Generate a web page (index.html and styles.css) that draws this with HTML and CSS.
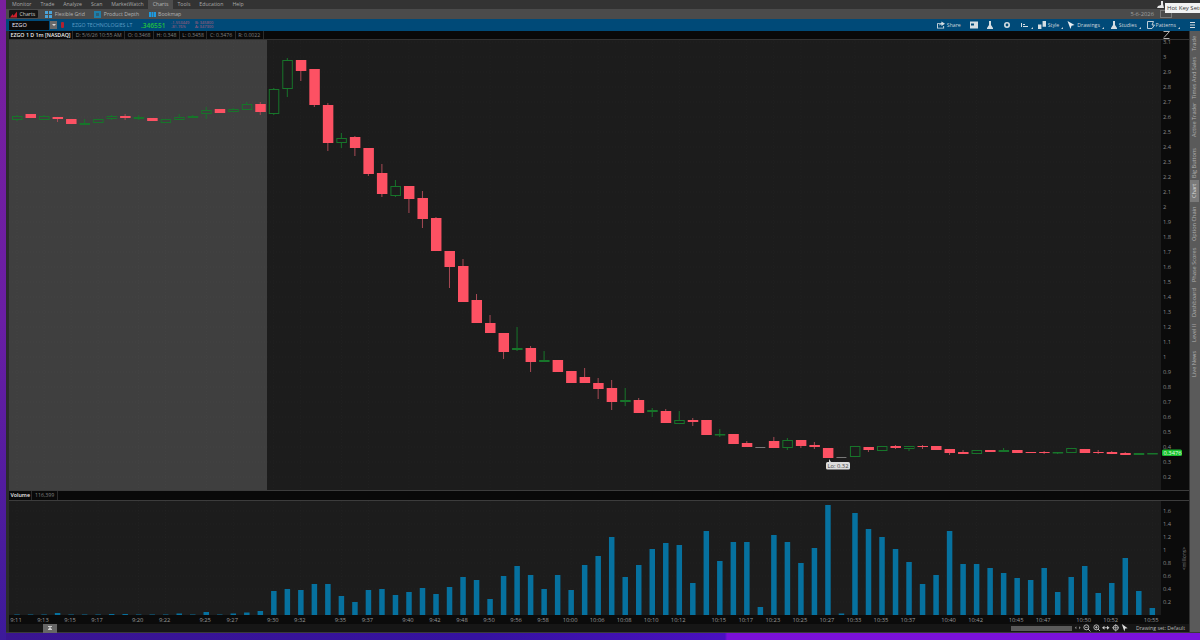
FILE: index.html
```html
<!DOCTYPE html>
<html lang="en">
<head>
    <meta charset="UTF-8">
    <title>EZGO Chart</title>
    <link rel="stylesheet" href="styles.css">
</head>
<body>
    <div class="window">
        <div class="menu-bar">
            <span class="menu-item">Monitor</span>
            <span class="menu-item">Trade</span>
            <span class="menu-item">Analyze</span>
            <span class="menu-item">Scan</span>
            <span class="menu-item">MarketWatch</span>
            <span class="menu-item active">Charts</span>
            <span class="menu-item">Tools</span>
            <span class="menu-item">Education</span>
            <span class="menu-item">Help</span>
        </div>

        <div class="sub-bar">
            <div class="sub-tab selected">
                <svg class="sub-icon" viewBox="0 0 8 7"><path d="M0 7 3 3l1 2 4-5v7z" fill="#c8202c"/></svg>
                <span>Charts</span>
            </div>
            <div class="sub-tab">
                <svg class="sub-icon" viewBox="0 0 7 7"><path d="M0 0h3v3H0zM4 0h3v3H4zM0 4h3v3H0zM4 4h3v3H4z" fill="#4aa3d8"/></svg>
                <span>Flexible Grid</span>
            </div>
            <div class="sub-tab">
                <svg class="sub-icon" viewBox="0 0 7 7"><rect width="7" height="7" fill="#1f7ea8"/><rect x="2" y="2" width="3" height="3" fill="#2a5f78"/></svg>
                <span>Product Depth</span>
            </div>
            <div class="sub-tab">
                <svg class="sub-icon" viewBox="0 0 7 7"><path d="M0 1h2v5H0zM2.500 1h2v5h-2zM5 1h2v5H5z" fill="#1d9ae0"/></svg>
                <span>Bookmap</span>
            </div>
            <div class="sub-right">
                <span class="date">5-6-2026</span>
                <span class="date-box"></span>
            </div>
        </div>

        <div class="symbol-bar">
            <div class="symbol-input">EZGO</div>
            <div class="symbol-drop"><span class="drop-arrow"></span></div>
            <span class="symbol-flag"></span>
            <span class="symbol-name">EZGO TECHNOLOGIES LT</span>
            <span class="symbol-price">.346551</span>
            <div class="symbol-stats">
                <span>-1.553449</span>
                <span>-81.76%</span>
            </div>
            <div class="symbol-stats">
                <span>B: 345800</span>
                <span>A: 347300</span>
            </div>
            <div class="tools">
                <span class="tool share">
                    <svg viewBox="0 0 9 8"><path d="M0 2h4v1H1v4h6V5h1v3H0z M5 0l4 2.500L5 5V3.500C4 3.500 3 4 2.500 5 2.500 3 3.500 2 5 1.500z" fill="#d5dde2"/></svg>
                    Share
                </span>
                <span class="tool icon-only screen">
                    <svg viewBox="0 0 8 7"><path d="M0 0h8v7H0z" fill="#d5dde2"/><path d="M1 2h3v2H1z" fill="#004a78"/></svg>
                </span>
                <span class="tool icon-only flask">
                    <svg viewBox="0 0 8 8"><path d="M3 0h2v4l2 3v1H1V7l2-3z" fill="#d5dde2"/></svg>
                </span>
                <span class="tool icon-only gear">
                    <svg viewBox="0 0 8 8"><circle cx="4" cy="4" r="2.200" fill="none" stroke="#d5dde2" stroke-width="1.600"/></svg>
                </span>
                <span class="tool icon-only bars">
                    <svg viewBox="0 0 8 6"><path d="M0 1h1v4H0zM2 2h2v1H2zM2 4h5v1H2z" fill="#d5dde2"/></svg>
                </span>
                <span class="tool style">
                    <svg viewBox="0 0 7 7"><path d="M0 3h3v4H0zM4 0h3v5H4z" fill="#d5dde2"/></svg>
                    Style
                </span>
                <span class="tool drawings">
                    <svg viewBox="0 0 7 8"><path d="M0 0l7 4-3 .8L3 8z" fill="#e8eef2"/></svg>
                    Drawings
                </span>
                <span class="tool studies">
                    <svg viewBox="0 0 8 8"><path d="M3 0h2v4l2 3v1H1V7l2-3z" fill="#d5dde2"/></svg>
                    Studies
                </span>
                <span class="tool patterns">
                    <svg viewBox="0 0 8 8"><path d="M.5.5h6L5 4h2.500L5 7.500H.5z" fill="none" stroke="#d5dde2" stroke-width=".9"/></svg>
                    Patterns
                </span>
                <span class="tool icon-only last">
                    <svg viewBox="0 0 8 8"><path d="M1 1h5v1H1zM1 3.500h5v1H1zM1 6h5v1H1z" fill="#d5dde2"/></svg>
                </span>
            </div>
        </div>

        <div class="workspace">
            <div class="chart-column">
                <div class="info-bar">
                    <span class="info-cell title">EZGO 1 D 1m [NASDAQ]</span>
                    <span class="info-cell">D: 5/6/26 10:55 AM</span>
                    <span class="info-cell">O: 0.3468</span>
                    <span class="info-cell">H: 0.348</span>
                    <span class="info-cell">L: 0.3458</span>
                    <span class="info-cell">C: 0.3476</span>
                    <span class="info-cell">R: 0.0022</span>
                    <svg class="scale-icon" viewBox="0 0 7 8"><path d="M.5.5h6L1 6.500M.5 7.500h6" fill="none" stroke="#b4b4b4"/></svg>
                </div>
                <svg class="price-pane" id="pricePane" viewBox="9 40 1180 450"></svg>
                <div class="info-bar volume-bar">
                    <span class="info-cell title">Volume</span>
                    <span class="info-cell">116,399</span>
                </div>
                <svg class="volume-pane" id="volumePane" viewBox="9 501 1180 123"></svg>
                <div class="status-bar">
                    <span class="collapse-btn"><svg viewBox="0 0 6 6"><path d="M0 0h6v1H0zM3 1.500 5.500 4h-5zM0 5h6v1H0z" fill="#eee"/></svg></span>
                    <div class="status-right">
                        <span class="scroll-track"></span>
                        <svg class="status-icon" viewBox="0 0 8 8"><path d="M2.500 2.500 1 4l1.500 1.500zM5.500 2.500 7 4 5.500 5.500z" fill="#999"/></svg>
                        <svg class="status-icon" viewBox="0 0 9 9"><circle cx="4" cy="4" r="3" fill="none" stroke="#ccc"/><path d="M2.500 4h3M6 6l3 3" stroke="#ccc"/></svg>
                        <svg class="status-icon" viewBox="0 0 9 9"><circle cx="4" cy="4" r="3" fill="none" stroke="#ccc"/><path d="M2.500 4h3M4 2.500v3M6 6l3 3" stroke="#ccc"/></svg>
                        <svg class="status-icon" viewBox="0 0 9 9"><path d="M0 4.500 3 2v5zM9 4.500 6 2v5z" fill="#ccc"/><path d="M3 4h3v1H3z" fill="#ccc"/></svg>
                        <svg class="status-icon" viewBox="0 0 9 9"><circle cx="4.500" cy="4.500" r="3" fill="none" stroke="#ccc"/><path d="M4.500 0v9M0 4.500h9" stroke="#ccc" stroke-width=".8"/></svg>
                        <svg class="status-icon" viewBox="0 0 7 9"><path d="M0 0l7 5-3 .5L3 9z" fill="#ddd"/></svg>
                        <span class="drawing-set">Drawing set: Default</span>
                    </div>
                </div>
            </div>

            <div class="side-rail">
                <span class="rail-tab trade">Trade</span>
                <span class="rail-tab times">Times And Sales</span>
                <span class="rail-tab active-trader">Active Trader</span>
                <span class="rail-tab big">Big Buttons</span>
                <span class="rail-tab chart selected">Chart</span>
                <span class="rail-tab option">Option Chain</span>
                <span class="rail-tab phase">Phase Scores</span>
                <span class="rail-tab dash">Dashboard</span>
                <span class="rail-tab level">Level II</span>
                <span class="rail-tab news">Live News</span>
            </div>
        </div>
    </div>

    <div class="tooltip">Hot Key Setup</div>
    <svg class="tooltip-icon" viewBox="0 0 7 7"><path d="M4 0h2v3l1 4H0l1-2 3-1z" fill="#e6e6e6"/></svg>

    <script src="chart.js"></script>
</body>
</html>
```

FILE: styles.css
```css
* {
    margin: 0;
    padding: 0;
    box-sizing: border-box;
}

html, body {
    width: 1200px;
    height: 640px;
    overflow: hidden;
}

body {
    font-family: "Open Sans", "Liberation Sans", sans-serif;
    background:
        linear-gradient(180deg, #7a1f9f 0%, #6a1ea4 50%, #3c1a9a 100%) left top / 6px 100% no-repeat,
        linear-gradient(90deg, #3a1590 0%, #3512a0 40%, #4a10c0 60.4%, #7a10d8 60.6%, #7a12dc 100%);
    position: relative;
}

.window {
    margin-left: 6px;
    height: 633px;
    background: #2b2b2b;
    display: flex;
    flex-direction: column;
    border-bottom: 1px solid #3a3a3a;
}

.menu-bar {
    height: 9px;
    background: #333;
    display: flex;
    padding-left: 1.5px;
    font-size: 5.2px;
    line-height: 9px;
    color: #a8a8a8;
}

.menu-item {
    padding: 0 4.5px;
}

.menu-item.active {
    background: #4d4d4d;
    color: #b8b8b8;
}

.sub-bar {
    height: 10px;
    background: #4b4b4b;
    display: flex;
    align-items: center;
    padding-left: 3px;
    font-size: 5.2px;
    color: #b4b4b4;
}

.sub-tab {
    display: flex;
    align-items: center;
    gap: 2.5px;
    height: 8px;
    padding: 0 4px 0 3px;
    margin-right: 2.5px;
}

.sub-tab.selected {
    background: #151515;
    border-radius: 1px;
    color: #ccc;
    padding: 0 3px 0 1px;
    margin-right: 4px;
}

.sub-icon {
    width: 7px;
    height: 7px;
}

.sub-right {
    margin-left: auto;
    display: flex;
    align-items: center;
    gap: 6px;
    padding-right: 28px;
}

.date {
    font-size: 5.8px;
    color: #a0a0a0;
}

.date-box {
    width: 12px;
    height: 8px;
    border: 1px solid #777;
}

.symbol-bar {
    height: 12px;
    background: #004a78;
    display: flex;
    align-items: center;
    padding-left: 3px;
    font-size: 5.2px;
}

.symbol-input {
    width: 40px;
    height: 9px;
    background: #0b0b0b;
    color: #eef;
    font-size: 5.6px;
    line-height: 9px;
    padding-left: 3px;
}

.symbol-drop {
    width: 7px;
    height: 8px;
    background: #6a6a6a;
    margin-left: 1px;
    display: flex;
    align-items: center;
    justify-content: center;
}

.drop-arrow {
    border: 2px solid transparent;
    border-top-color: #ddd;
    margin-top: 2px;
}

.symbol-flag {
    width: 3px;
    height: 6px;
    margin-left: 4px;
    background: #b02030;
    border-radius: 1px;
}

.symbol-name {
    margin-left: 8px;
    color: #5c9cc4;
    width: 69px;
    white-space: nowrap;
}

.symbol-price {
    color: #20c040;
    font-size: 6.6px;
    font-weight: 600;
    width: 30px;
}

.symbol-stats {
    display: flex;
    flex-direction: column;
    width: 24px;
    font-size: 4px;
    line-height: 4px;
    color: #b8607c;
}

.tools {
    margin-left: auto;
    display: flex;
    align-items: center;
    height: 100%;
    color: #cfd8de;
    padding-right: 3px;
}

.tool {
    display: flex;
    align-items: center;
    gap: 2px;
    white-space: nowrap;
    position: relative;
}

.tool svg {
    width: 8px;
    height: 8px;
}

.tool::after {
    content: "";
    position: absolute;
    right: -4px;
    bottom: 0;
    border: 1px solid transparent;
    border-right-color: #c8d0d6;
    border-bottom-color: #c8d0d6;
}

.tool.share::after, .tool.screen::after, .tool.flask::after, .tool.gear::after, .tool.last::after {
    display: none;
}

.tool.share { margin-right: 9px; }
.tool.screen { margin-right: 8px; }
.tool.flask { margin-right: 9px; }
.tool.gear { margin-right: 10px; }
.tool.bars { margin-right: 9px; }
.tool.style { margin-right: 8px; }
.tool.drawings { margin-right: 10px; }
.tool.studies { margin-right: 10px; gap: 1px; }
.tool.patterns { margin-right: 13px; gap: 1px; }

.workspace {
    flex: 1;
    display: flex;
    min-height: 0;
    padding-left: 3px;
}

.chart-column {
    width: 1180px;
    display: flex;
    flex-direction: column;
}

.info-bar {
    height: 9px;
    background: #090909;
    display: flex;
    font-size: 5.2px;
    line-height: 8px;
    color: #808080;
    border-bottom: 1px solid #333;
}

.info-cell {
    padding: 0 2.5px;
    border-right: 1px solid #2c2c2c;
    white-space: nowrap;
}

.info-cell.title {
    color: #eee;
    font-size: 5.3px;
    font-weight: 600;
    padding: 0 1.5px;
}

.scale-icon {
    width: 7px;
    height: 8px;
    margin-left: auto;
    margin-right: 19px;
}

.price-pane {
    display: block;
    width: 1180px;
    height: 450px;
    overflow: visible;
}

.volume-bar {
    height: 11px;
    line-height: 9px;
    border-top: 1px solid #3c3c3c;
    border-bottom: 1px solid #3c3c3c;
}

.volume-pane {
    display: block;
    width: 1180px;
    height: 123px;
}

.status-bar {
    height: 8px;
    flex: none;
    background: #161616;
    display: flex;
    align-items: center;
    font-size: 5.2px;
    color: #b8b8b8;
}

.collapse-btn {
    margin-left: 34px;
    width: 14px;
    height: 9px;
    background: #666;
    display: flex;
    align-items: center;
    justify-content: center;
}

.collapse-btn svg {
    width: 4px;
    height: 4px;
}

.status-right {
    margin-left: auto;
    display: flex;
    align-items: center;
    gap: 2px;
    padding-right: 4px;
}

.scroll-track {
    width: 61px;
    height: 5px;
    background: #5a5a5a;
}

.status-icon {
    width: 7.5px;
    height: 7.5px;
}

.drawing-set {
    margin-left: 5px;
    white-space: nowrap;
}

.side-rail {
    flex: 1;
    background: #5a5a5a;
    border-left: 1px solid #333;
    display: flex;
    flex-direction: column;
}

.rail-tab {
    writing-mode: vertical-rl;
    transform: rotate(180deg);
    font-size: 5.6px;
    color: #b0b0b0;
    text-align: center;
    width: 9px;
    line-height: 9px;
    white-space: nowrap;
}

.rail-tab.selected {
    background: #7a7a7a;
    color: #d8d8d8;
}

.rail-tab.trade { height: 24px; }
.rail-tab.times { height: 45px; }
.rail-tab.active-trader { height: 40px; margin-bottom: 6px; }
.rail-tab.big { height: 34px; }
.rail-tab.chart { height: 22px; }
.rail-tab.option { height: 44px; }
.rail-tab.phase { height: 37px; }
.rail-tab.dash { height: 40px; }
.rail-tab.level { height: 21px; }
.rail-tab.news { height: 40px; }

.tooltip {
    position: absolute;
    top: 3px;
    left: 1165px;
    width: 40px;
    height: 10px;
    background: #f2f2f2;
    color: #333;
    font-size: 6px;
    line-height: 10px;
    padding-left: 2px;
    white-space: nowrap;
    overflow: hidden;
}

.tooltip-icon {
    position: absolute;
    top: 1px;
    left: 1157px;
    width: 7px;
    height: 7px;
}

.axis-text {
    font-family: "Open Sans", "Liberation Sans", sans-serif;
    font-size: 5.8px;
    fill: #8a8a8a;
}

.time-text {
    text-anchor: middle;
    fill: #9a9a9a;
}

.units-text {
    font-size: 4.8px;
}

.last-text {
    fill: #e8ffe8;
}

.lo-text {
    font-family: "Open Sans", "Liberation Sans", sans-serif;
    font-size: 5.8px;
    fill: #444;
    text-anchor: middle;
}
```

FILE: chart.js
```javascript
// candles: [top, bottom, wickTop, wickBottom, isUp] in page pixels
var candles = [
    [116, 120, 115, 121, 1], [114, 118, 114, 118, 0], [116, 120, 115, 120, 1], [117, 119, 117, 122, 0],
    [119, 124, 119, 124, 0], [123, 125, 119, 125, 1], [119, 123, 119, 123, 1], [116, 119, 115, 120, 1],
    [116, 118, 114, 120, 0], [117, 119, 115, 120, 1], [118, 121, 118, 121, 0], [119, 123, 119, 123, 1],
    [117, 120, 114, 120, 1], [116, 118, 115, 118, 1], [110, 114, 107, 119, 1], [109, 113, 109, 113, 0],
    [109, 112, 108, 112, 1], [104, 110, 102, 110, 1], [104, 112, 102, 115, 0], [89, 114, 88, 115, 1],
    [60, 89, 58, 97, 1], [60, 71, 60, 81, 0], [69, 105, 69, 107, 0], [105, 143, 103, 151, 0],
    [138, 143, 133, 148, 1], [137, 148, 136, 156, 0], [148, 174, 148, 176, 0], [173, 194, 164, 197, 0],
    [186, 196, 180, 197, 1], [186, 199, 186, 213, 0], [198, 219, 191, 228, 0], [218, 251, 217, 251, 0],
    [251, 267, 251, 288, 0], [266, 302, 259, 302, 0], [300, 323, 294, 323, 0], [323, 333, 315, 333, 0],
    [333, 352, 333, 359, 0], [348, 350, 327, 351, 1], [348, 362, 346, 372, 0], [360, 362, 351, 362, 1],
    [360, 372, 360, 372, 0], [371, 383, 371, 383, 0], [377, 383, 368, 383, 0], [383, 389, 378, 399, 0],
    [388, 402, 380, 410, 0], [400, 402, 388, 406, 1], [400, 413, 398, 413, 0], [410, 412, 408, 417, 1],
    [411, 423, 409, 423, 0], [420, 424, 411, 424, 1], [420, 422, 418, 426, 0], [420, 435, 420, 435, 0],
    [434, 435, 429, 437, 1], [434, 444, 434, 444, 0], [443, 447, 441, 447, 0], [447, 447.8, 447, 448, 2],
    [441, 448, 437, 448, 0], [440, 448, 438, 450, 1], [440, 446, 440, 448, 0], [445, 447, 442, 449, 0],
    [448, 458, 448, 458, 0], [457, 458, 457, 458, 2], [446, 457, 446, 457, 1], [447, 450, 447, 452, 0],
    [446, 451, 446, 451, 1], [446, 448, 445, 449, 0], [446, 449, 446, 451, 1], [446, 447, 445, 449, 0],
    [446, 450, 446, 450, 0], [449, 453, 449, 455, 0], [452, 454, 450, 454, 0], [450, 454, 450, 454, 1],
    [450, 452, 450, 452, 0], [450, 452, 448, 452, 1], [450, 453, 450, 453, 0], [452, 453, 452, 453, 0],
    [452, 453, 451, 454, 0], [452, 453, 452, 454, 1], [448, 453, 448, 453, 1], [449, 453, 449, 453, 0],
    [452, 453, 450, 454, 0], [452, 454, 451, 454, 0], [453, 455, 452, 455, 0], [453, 455, 453, 455, 1],
    [453, 454, 453, 454, 1]
];

// volume bar tops in page pixels, baseline is 615
var volumes = [
    614.5, 614.5, 614.5, 613, 614.5, 614.5, 614.5, 614, 614, 614.5, 614.5, 614.5,
    613.5, 614.5, 612, 614.5, 613.5, 612.5, 611, 591, 589, 590, 584, 584,
    596, 602, 590, 589, 595, 592, 588, 594, 587, 577, 580, 599,
    576, 566, 575, 589, 575, 590, 565, 556, 537, 577, 565, 549,
    543, 545, 583, 531, 561, 542, 542, 607, 535, 542, 563, 548,
    505, 613.5, 513, 529, 537, 549, 562, 584, 575, 531, 564, 564,
    568, 573, 578, 580, 568, 592, 577, 566, 593, 583, 558, 591,
    608
];

var times = [
    ["9:11", 0], ["9:13", 2], ["9:15", 4], ["9:17", 6], ["9:20", 9], ["9:22", 11], ["9:25", 14], ["9:27", 16],
    ["9:30", 19], ["9:32", 21], ["9:35", 24], ["9:37", 26], ["9:40", 29], ["9:42", 31], ["9:48", 33], ["9:50", 35],
    ["9:56", 37], ["9:58", 39], ["10:00", 41], ["10:06", 43], ["10:08", 45], ["10:10", 47], ["10:12", 49], ["10:15", 52],
    ["10:17", 54], ["10:23", 56], ["10:25", 58], ["10:27", 60], ["10:33", 62], ["10:35", 64], ["10:37", 66], ["10:40", 69],
    ["10:42", 71], ["10:45", 74], ["10:47", 76], ["10:50", 79], ["10:52", 81], ["10:55", 84]
];

var SVG_NS = "http://www.w3.org/2000/svg";
var RED = "#fd5163";
var RED_WICK = "#a84a55";
var GREEN = "#17752a";
var GREY_DASH = "#777";
var GRID = "rgba(255, 255, 255, 0.045)";

function candleX(i) {
    return 17 + i * 13.515;
}

function add(parent, tag, attrs, text) {
    var el = document.createElementNS(SVG_NS, tag);
    for (var key in attrs) {
        el.setAttribute(key, attrs[key]);
    }
    if (text !== undefined) {
        el.textContent = text;
    }
    parent.appendChild(el);
    return el;
}

function drawGrid(svg, top, bottom, rows) {
    rows.forEach(function (y) {
        add(svg, "line", { x1: 9, x2: 1161, y1: y, y2: y, stroke: GRID, "stroke-width": 0.6, "stroke-dasharray": "1 2" });
    });
    times.forEach(function (t) {
        var x = candleX(t[1]);
        add(svg, "line", { x1: x, x2: x, y1: top, y2: bottom, stroke: GRID, "stroke-width": 0.6, "stroke-dasharray": "1 2" });
    });
}

function drawPrice() {
    var svg = document.getElementById("pricePane");
    add(svg, "rect", { x: 9, y: 40, width: 1152, height: 450, fill: "#1c1c1c" });
    add(svg, "rect", { x: 9, y: 40, width: 258, height: 450, fill: "#3f3f3f" });
    add(svg, "rect", { x: 1161, y: 40, width: 28, height: 450, fill: "#0b0b0b" });

    var rows = [];
    for (var n = 31; n >= 2; n--) {
        rows.push(57 + (30 - n) * 15);
    }
    drawGrid(svg, 40, 490, rows);

    // price labels
    for (var p = 31; p >= 2; p--) {
        var y = 57 + (30 - p) * 15;
        var label = p % 10 === 0 ? String(p / 10) : (p / 10).toFixed(1);
        add(svg, "text", { x: 1163, y: y + 2, "class": "axis-text" }, label);
    }

    candles.forEach(function (c, i) {
        var x = candleX(i);
        var up = c[4] === 1;
        var flat = c[4] === 2;
        var wick = up ? GREEN : flat ? GREY_DASH : RED_WICK;
        add(svg, "line", { x1: x, x2: x, y1: c[2], y2: c[3], stroke: wick, "stroke-width": 1 });
        if (flat) {
            add(svg, "rect", { x: x - 5, y: c[0], width: 10, height: 1, fill: GREY_DASH });
        } else if (up) {
            var thin = c[1] - c[0] < 3;
            add(svg, "rect", {
                x: x - 4.5, y: c[0] + 0.5, width: 9.5, height: Math.max(c[1] - c[0] - 1, 0.5),
                fill: thin ? GREEN : i < 19 ? "#3f3f3f" : "#1c1c1c", stroke: GREEN, "stroke-width": 1
            });
        } else {
            add(svg, "rect", { x: x - 5, y: c[0], width: 10.5, height: c[1] - c[0], fill: RED });
        }
    });

    // last price badge
    add(svg, "rect", { x: 1162, y: 449.5, width: 20, height: 6.5, rx: 1.5, fill: "#18c02e" });
    add(svg, "text", { x: 1163.5, y: 455, "class": "axis-text last-text" }, "0.3476");

    // low marker
    add(svg, "path", { d: "M829 459l2 3h-2z", fill: "#ddd" });
    add(svg, "rect", { x: 826, y: 462, width: 24, height: 7.5, rx: 1.5, fill: "#dcdcdc" });
    add(svg, "text", { x: 838, y: 468, "class": "lo-text" }, "Lo: 0.32");
}

function drawVolume() {
    var svg = document.getElementById("volumePane");
    add(svg, "rect", { x: 9, y: 501, width: 1152, height: 114, fill: "#1c1c1c" });
    add(svg, "rect", { x: 1161, y: 501, width: 28, height: 123, fill: "#0b0b0b" });
    add(svg, "rect", { x: 9, y: 615, width: 1180, height: 9, fill: "#0b0b0b" });

    drawGrid(svg, 501, 615, [511, 524, 537, 550, 563, 576, 589, 602]);

    volumes.forEach(function (top, i) {
        add(svg, "rect", { x: candleX(i) - 2.7, y: top, width: 5.5, height: 615 - top, fill: "#06719f" });
    });

    ["1.6", "1.4", "1.2", "1", "0.8", "0.6", "0.4", "0.2"].forEach(function (label, i) {
        add(svg, "text", { x: 1163, y: 513 + i * 13, "class": "axis-text" }, label);
    });

    add(svg, "text", { x: 0, y: 0, "class": "axis-text units-text", transform: "translate(1186 570) rotate(-90)" }, "<millions>");

    times.forEach(function (t) {
        add(svg, "text", { x: candleX(t[1]) - 1, y: 621.5, "class": "axis-text time-text" }, t[0]);
    });
}

drawPrice();
drawVolume();
```
